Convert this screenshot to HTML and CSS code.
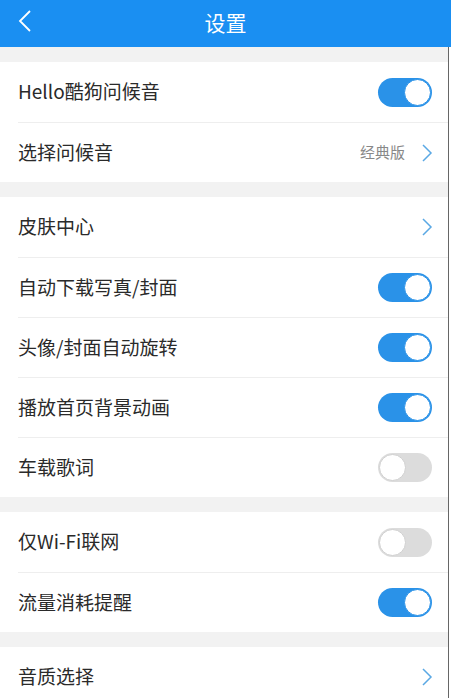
FILE: index.html
```html
<!DOCTYPE html>
<html lang="zh-CN">
<head>
    <meta charset="UTF-8">
    <meta name="viewport" content="width=device-width, initial-scale=1.0">
    <title>设置</title>
    <link rel="stylesheet" href="styles.css">
</head>
<body>
    <div class="topbar">
        <span class="back">
            <svg width="14" height="22" viewBox="0 0 14 22"><path d="M12 1 L2 11 L12 21" fill="none" stroke="#fff" stroke-width="1.8"/></svg>
        </span>
        <h1>设置</h1>
    </div>
    <div class="page">
        <div class="group">
            <div class="row"><span class="label">Hello酷狗问候音</span><span class="switch on"></span></div>
            <div class="row"><span class="label">选择问候音</span><span class="value">经典版</span><span class="arrow"><svg width="12" height="18" viewBox="0 0 12 18"><path d="M2 1 L10 9 L2 17" fill="none" stroke="#5aa8e4" stroke-width="1.5"/></svg></span></div>
        </div>
        <div class="group">
            <div class="row"><span class="label">皮肤中心</span><span class="arrow"><svg width="12" height="18" viewBox="0 0 12 18"><path d="M2 1 L10 9 L2 17" fill="none" stroke="#5aa8e4" stroke-width="1.5"/></svg></span></div>
            <div class="row"><span class="label">自动下载写真/封面</span><span class="switch on"></span></div>
            <div class="row"><span class="label">头像/封面自动旋转</span><span class="switch on"></span></div>
            <div class="row"><span class="label">播放首页背景动画</span><span class="switch on"></span></div>
            <div class="row"><span class="label">车载歌词</span><span class="switch"></span></div>
        </div>
        <div class="group">
            <div class="row"><span class="label">仅Wi-Fi联网</span><span class="switch"></span></div>
            <div class="row"><span class="label">流量消耗提醒</span><span class="switch on"></span></div>
        </div>
        <div class="group">
            <div class="row"><span class="label">音质选择</span><span class="arrow"><svg width="12" height="18" viewBox="0 0 12 18"><path d="M2 1 L10 9 L2 17" fill="none" stroke="#5aa8e4" stroke-width="1.5"/></svg></span></div>
        </div>
    </div>
</body>
</html>
```

FILE: styles.css
```css
* {
    margin: 0;
    padding: 0;
    box-sizing: border-box;
}
body {
    width: 451px;
    height: 698px;
    overflow: hidden;
    background-color: #fff;
    font-family: "Noto Sans CJK SC", "Noto Sans", sans-serif;
    color: #2a2a2a;
}
.topbar {
    height: 47px;
    background-color: #1a8ff2;
    display: flex;
    align-items: center;
    justify-content: center;
    position: relative;
}
.topbar h1 {
    font-size: 21px;
    font-weight: normal;
    color: #fff;
    padding-bottom: 3px;
}
.back {
    position: absolute;
    left: 18px;
    top: 10px;
    display: flex;
}
.page {
    width: 449px;
    background-color: #f2f2f2;
    border-right: 1px solid #666;
    padding-top: 15px;
}
.group {
    background-color: #fff;
    margin-bottom: 15px;
    padding-left: 18px;
}
.row {
    height: 60px;
    display: flex;
    align-items: center;
    padding-right: 16px;
    border-top: 1px solid #eeeeee;
}
.row:first-child {
    border-top: none;
}
.label {
    flex: 1;
    font-size: 19px;
    padding-bottom: 3px;
}
.value {
    font-size: 15px;
    color: #888;
    margin-right: 16px;
    padding-bottom: 2px;
}
.arrow {
    display: flex;
    margin-right: -1px;
}
.switch {
    width: 54px;
    height: 29px;
    border-radius: 15px;
    background-color: #dcdcdc;
    position: relative;
}
.switch::after {
    content: "";
    position: absolute;
    left: 1px;
    top: 1px;
    width: 27px;
    height: 27px;
    border-radius: 50%;
    background-color: #fff;
    box-sizing: border-box;
    border: 1px solid #d0d0d0;
}
.switch.on {
    background-color: #2a92e8;
}
.switch.on::after {
    left: 26px;
    border: 1px solid #2a92e8;
}
```
